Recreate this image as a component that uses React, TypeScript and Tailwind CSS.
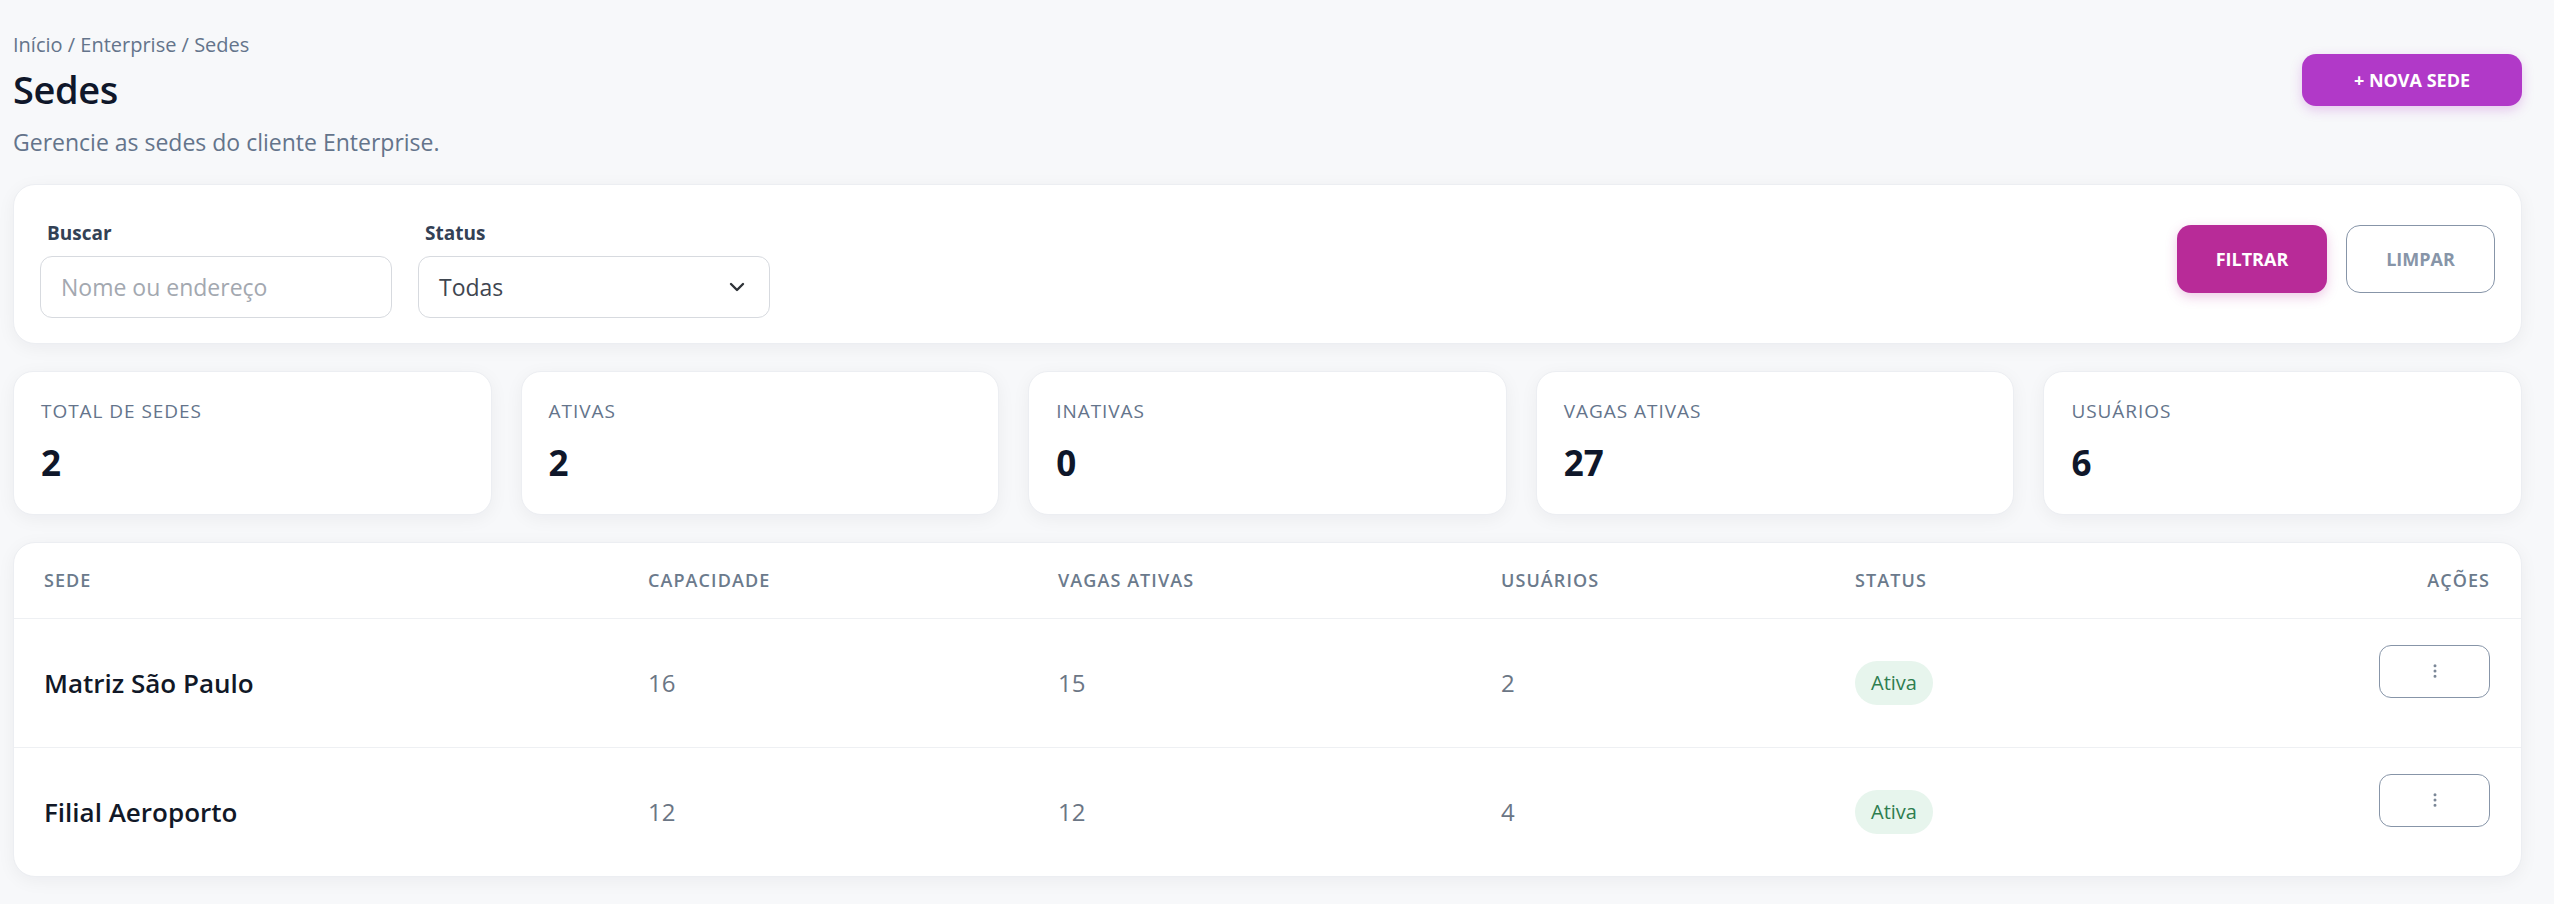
import { ChevronDown, EllipsisVertical } from "lucide-react";

const stats = [
  { label: "Total de sedes", value: 2 },
  { label: "Ativas", value: 2 },
  { label: "Inativas", value: 0 },
  { label: "Vagas ativas", value: 27 },
  { label: "Usuários", value: 6 },
];

const sedes = [
  { nome: "Matriz São Paulo", capacidade: 16, vagas: 15, usuarios: 2, status: "Ativa" },
  { nome: "Filial Aeroporto", capacidade: 12, vagas: 12, usuarios: 4, status: "Ativa" },
];

const cols = "grid grid-cols-[604px_410px_443px_354px_1fr_auto] items-center pl-[30px] pr-[31px]";

export default function App() {
  return (
    <div className="min-h-screen bg-[#f7f8fa] pt-[30px] pl-[13px] pr-[32px] pb-[28px] font-['Open_Sans',sans-serif]">
      {/* Page header */}
      <div className="flex items-start justify-between">
        <div>
          <p className="text-[20px] leading-[30px] text-[#64748b]">Início / Enterprise / Sedes</p>
          <h1 className="mt-[7px] text-[38px] leading-[44px] font-semibold tracking-[-0.01em] text-[#0f172a]">Sedes</h1>
          <p className="mt-[15px] text-[23px] leading-[32px] text-[#64748b]">Gerencie as sedes do cliente Enterprise.</p>
        </div>
        <button className="mt-[24px] h-[52px] w-[220px] rounded-[14px] bg-[#b139c8] text-[18px] font-bold text-white shadow-[0_4px_12px_rgba(177,57,200,0.25)]">
          + NOVA SEDE
        </button>
      </div>

      {/* Filters */}
      <div className="mt-[26px] flex justify-between rounded-[22px] border border-[#eceef2] bg-white px-[26px] pt-[36px] pb-[25px] shadow-[0_4px_18px_rgba(15,23,42,0.05)]">
        <div className="flex gap-[26px]">
          <div className="w-[352px]">
            <label className="block pl-[7px] text-[19px] leading-[24px] font-bold text-[#334155]">Buscar</label>
            <div className="mt-[11px] flex h-[62px] items-center rounded-[12px] border border-[#d7dadf] px-[20px] text-[23px] text-[#a3a8b0]">
              Nome ou endereço
            </div>
          </div>
          <div className="w-[352px]">
            <label className="block pl-[7px] text-[19px] leading-[24px] font-bold text-[#334155]">Status</label>
            <div className="mt-[11px] flex h-[62px] items-center justify-between rounded-[12px] border border-[#d7dadf] pl-[20px] pr-[20px] text-[23px] text-[#3f4650]">
              <span>Todas</span>
              <ChevronDown size={24} strokeWidth={2.4} className="text-[#2f3338]" />
            </div>
          </div>
        </div>
        <div className="mt-[4px] flex gap-[19px]">
          <button className="h-[68px] w-[150px] rounded-[14px] bg-[#b82b98] text-[18px] font-bold text-white shadow-[0_4px_12px_rgba(184,43,152,0.25)]">
            FILTRAR
          </button>
          <button className="h-[68px] w-[149px] rounded-[14px] border-[1.5px] border-[#8795a8] bg-white text-[18px] font-bold text-[#8795a8]">
            LIMPAR
          </button>
        </div>
      </div>

      {/* Stats */}
      <div className="mt-[27px] grid grid-cols-5 gap-[29px]">
        {stats.map((s) => (
          <div
            key={s.label}
            className="h-[144px] rounded-[20px] border border-[#eceef2] bg-white px-[27px] pt-[26px] shadow-[0_4px_18px_rgba(15,23,42,0.05)]"
          >
            <p className="text-[19px] leading-[26px] uppercase tracking-[0.05em] text-[#64748b]">{s.label}</p>
            <p className="mt-[17px] text-[35px] leading-[44px] font-bold text-[#0f172a]">{s.value}</p>
          </div>
        ))}
      </div>

      {/* Table */}
      <div className="mt-[27px] overflow-hidden rounded-[22px] border border-[#eceef2] bg-white shadow-[0_4px_18px_rgba(15,23,42,0.05)]">
        <div className={`${cols} h-[75px] text-[18px] font-semibold uppercase tracking-[0.06em] text-[#6b7a8c]`}>
          <span>Sede</span>
          <span>Capacidade</span>
          <span>Vagas ativas</span>
          <span>Usuários</span>
          <span>Status</span>
          <span className="text-right">Ações</span>
        </div>
        {sedes.map((s) => (
          <div key={s.nome} className={`${cols} h-[129px] border-t border-[#eef0f3]`}>
            <span className="text-[26px] font-semibold text-[#111827]">{s.nome}</span>
            <span className="text-[24px] text-[#6b7685]">{s.capacidade}</span>
            <span className="text-[24px] text-[#6b7685]">{s.vagas}</span>
            <span className="text-[24px] text-[#6b7685]">{s.usuarios}</span>
            <span>
              <span className="inline-flex h-[44px] items-center rounded-full bg-[#e7f5ed] px-[16px] text-[20px] font-medium text-[#2e7d4f]">
                {s.status}
              </span>
            </span>
            <button className="mb-[24px] flex h-[53px] w-[111px] items-center justify-center rounded-[12px] border-[1.5px] border-[#8795a8] bg-white text-[#7b8797]">
              <EllipsisVertical size={18} strokeWidth={2} />
            </button>
          </div>
        ))}
      </div>
    </div>
  );
}
